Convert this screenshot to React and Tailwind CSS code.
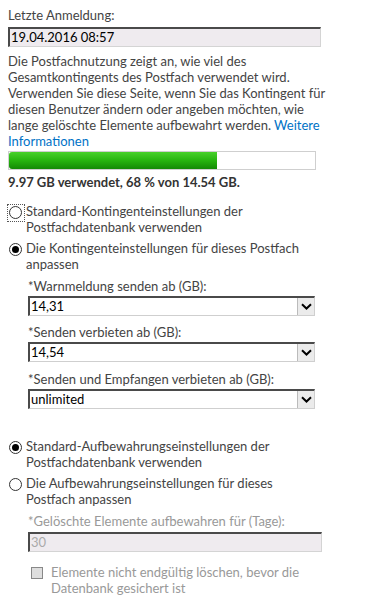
import React from "react";

function Radio({ checked, focus }) {
  return (
    <span className="relative flex-none w-[13px] h-[13px] rounded-full border border-[#333] bg-white flex items-center justify-center">
      {checked && <span className="w-[7px] h-[7px] rounded-full bg-black" />}
      {focus && <span className="absolute left-[-3px] top-[-3px] w-[18px] h-[18px] border border-dotted border-[#555]" />}
    </span>
  );
}

function Select({ value }) {
  return (
    <div className="flex h-[20px] w-[287px] bg-white border-t-2 border-l-2 border-[#4a4a4a] border-r border-b border-r-[#cfcfcf] border-b-[#cfcfcf]">
      <div className="flex-1 pl-[1px] leading-[17px] text-black">{value}</div>
      <div className="w-[17px] h-[17px] bg-[#ebebeb] border-l border-[#bbb] flex items-center justify-center">
        <svg width="11" height="7" viewBox="0 0 11 7"><path d="M1 1.2 L5.5 5.5 L10 1.2" fill="none" stroke="#000" strokeWidth="2" /></svg>
      </div>
    </div>
  );
}

function RadioRow({ checked, focus, mt, children }) {
  return (
    <div className={"flex items-start " + mt}>
      <div className="mt-[3px] ml-[1px] w-[17px] flex-none"><Radio checked={checked} focus={focus} /></div>
      <div>{children}</div>
    </div>
  );
}

export default function App() {
  return (
    <div className="w-[365px] h-[609px] bg-white text-[13px] leading-[16px] text-[#444] pl-[8px] pt-[7px]" style={{ fontFamily: 'Lato, sans-serif' }}>
      <div>Letzte Anmeldung:</div>
      <div className="mt-[4px] w-[313px] h-[20px] bg-[#efebef] border-t-2 border-l-2 border-[#4a4a4a] border-r border-b border-r-[#d4d4d4] border-b-[#d4d4d4] pl-[1px] leading-[17px] text-black">19.04.2016 08:57</div>
      <p className="mt-[6px]">
        Die Postfachnutzung zeigt an, wie viel des<br />
        Gesamtkontingents des Postfach verwendet wird.<br />
        Verwenden Sie diese Seite, wenn Sie das Kontingent für<br />
        diesen Benutzer ändern oder angeben möchten, wie<br />
        lange gelöschte Elemente aufbewahrt werden. <span className="text-[#0072c6]">Weitere<br />Informationen</span>
      </p>
      <div className="mt-[2px] w-[308px] h-[19px] border border-[#cfcfcf] bg-white flex">
        <div className="h-full w-[68%] bg-gradient-to-b from-[#47d12a] via-[#26b40f] to-[#138a06] rounded-l-[3px]" />
      </div>
      <div className="mt-[4px] font-bold text-[#333]">9.97 GB verwendet, 68 % von 14.54 GB.</div>

      <RadioRow focus mt="mt-[13px]">Standard-Kontingenteinstellungen der<br />Postfachdatenbank verwenden</RadioRow>
      <RadioRow checked mt="mt-[5px]">Die Kontingenteinstellungen für dieses Postfach<br />anpassen</RadioRow>

      <div className="ml-[20px] mt-[6px]">
        <div>*Warnmeldung senden ab (GB):</div>
        <div className="mt-[2px]"><Select value="14,31" /></div>
        <div className="mt-[8px]">*Senden verbieten ab (GB):</div>
        <div className="mt-[2px]"><Select value="14,54" /></div>
        <div className="mt-[9px]">*Senden und Empfangen verbieten ab (GB):</div>
        <div className="mt-[2px]"><Select value="unlimited" /></div>
      </div>

      <RadioRow checked mt="mt-[29px]">Standard-Aufbewahrungseinstellungen der<br />Postfachdatenbank verwenden</RadioRow>
      <RadioRow mt="mt-[5px]">Die Aufbewahrungseinstellungen für dieses<br />Postfach anpassen</RadioRow>

      <div className="ml-[20px] mt-[6px]">
        <div className="text-[#999]">*Gelöschte Elemente aufbewahren für (Tage):</div>
        <div className="mt-[3px] w-[294px] h-[20px] bg-[#efebef] border-t-2 border-l-2 border-[#4a4a4a] border-r border-b border-r-[#d4d4d4] border-b-[#d4d4d4] pl-[1px] leading-[17px] text-[#aaa]">30</div>
        <div className="mt-[12px] flex items-start">
          <span className="mt-[3px] ml-[3px] w-[12px] h-[12px] flex-none bg-[#dedede] border border-[#888]" />
          <div className="ml-[8px] text-[#999]">Elemente nicht endgültig löschen, bevor die<br />Datenbank gesichert ist</div>
        </div>
      </div>
    </div>
  );
}
